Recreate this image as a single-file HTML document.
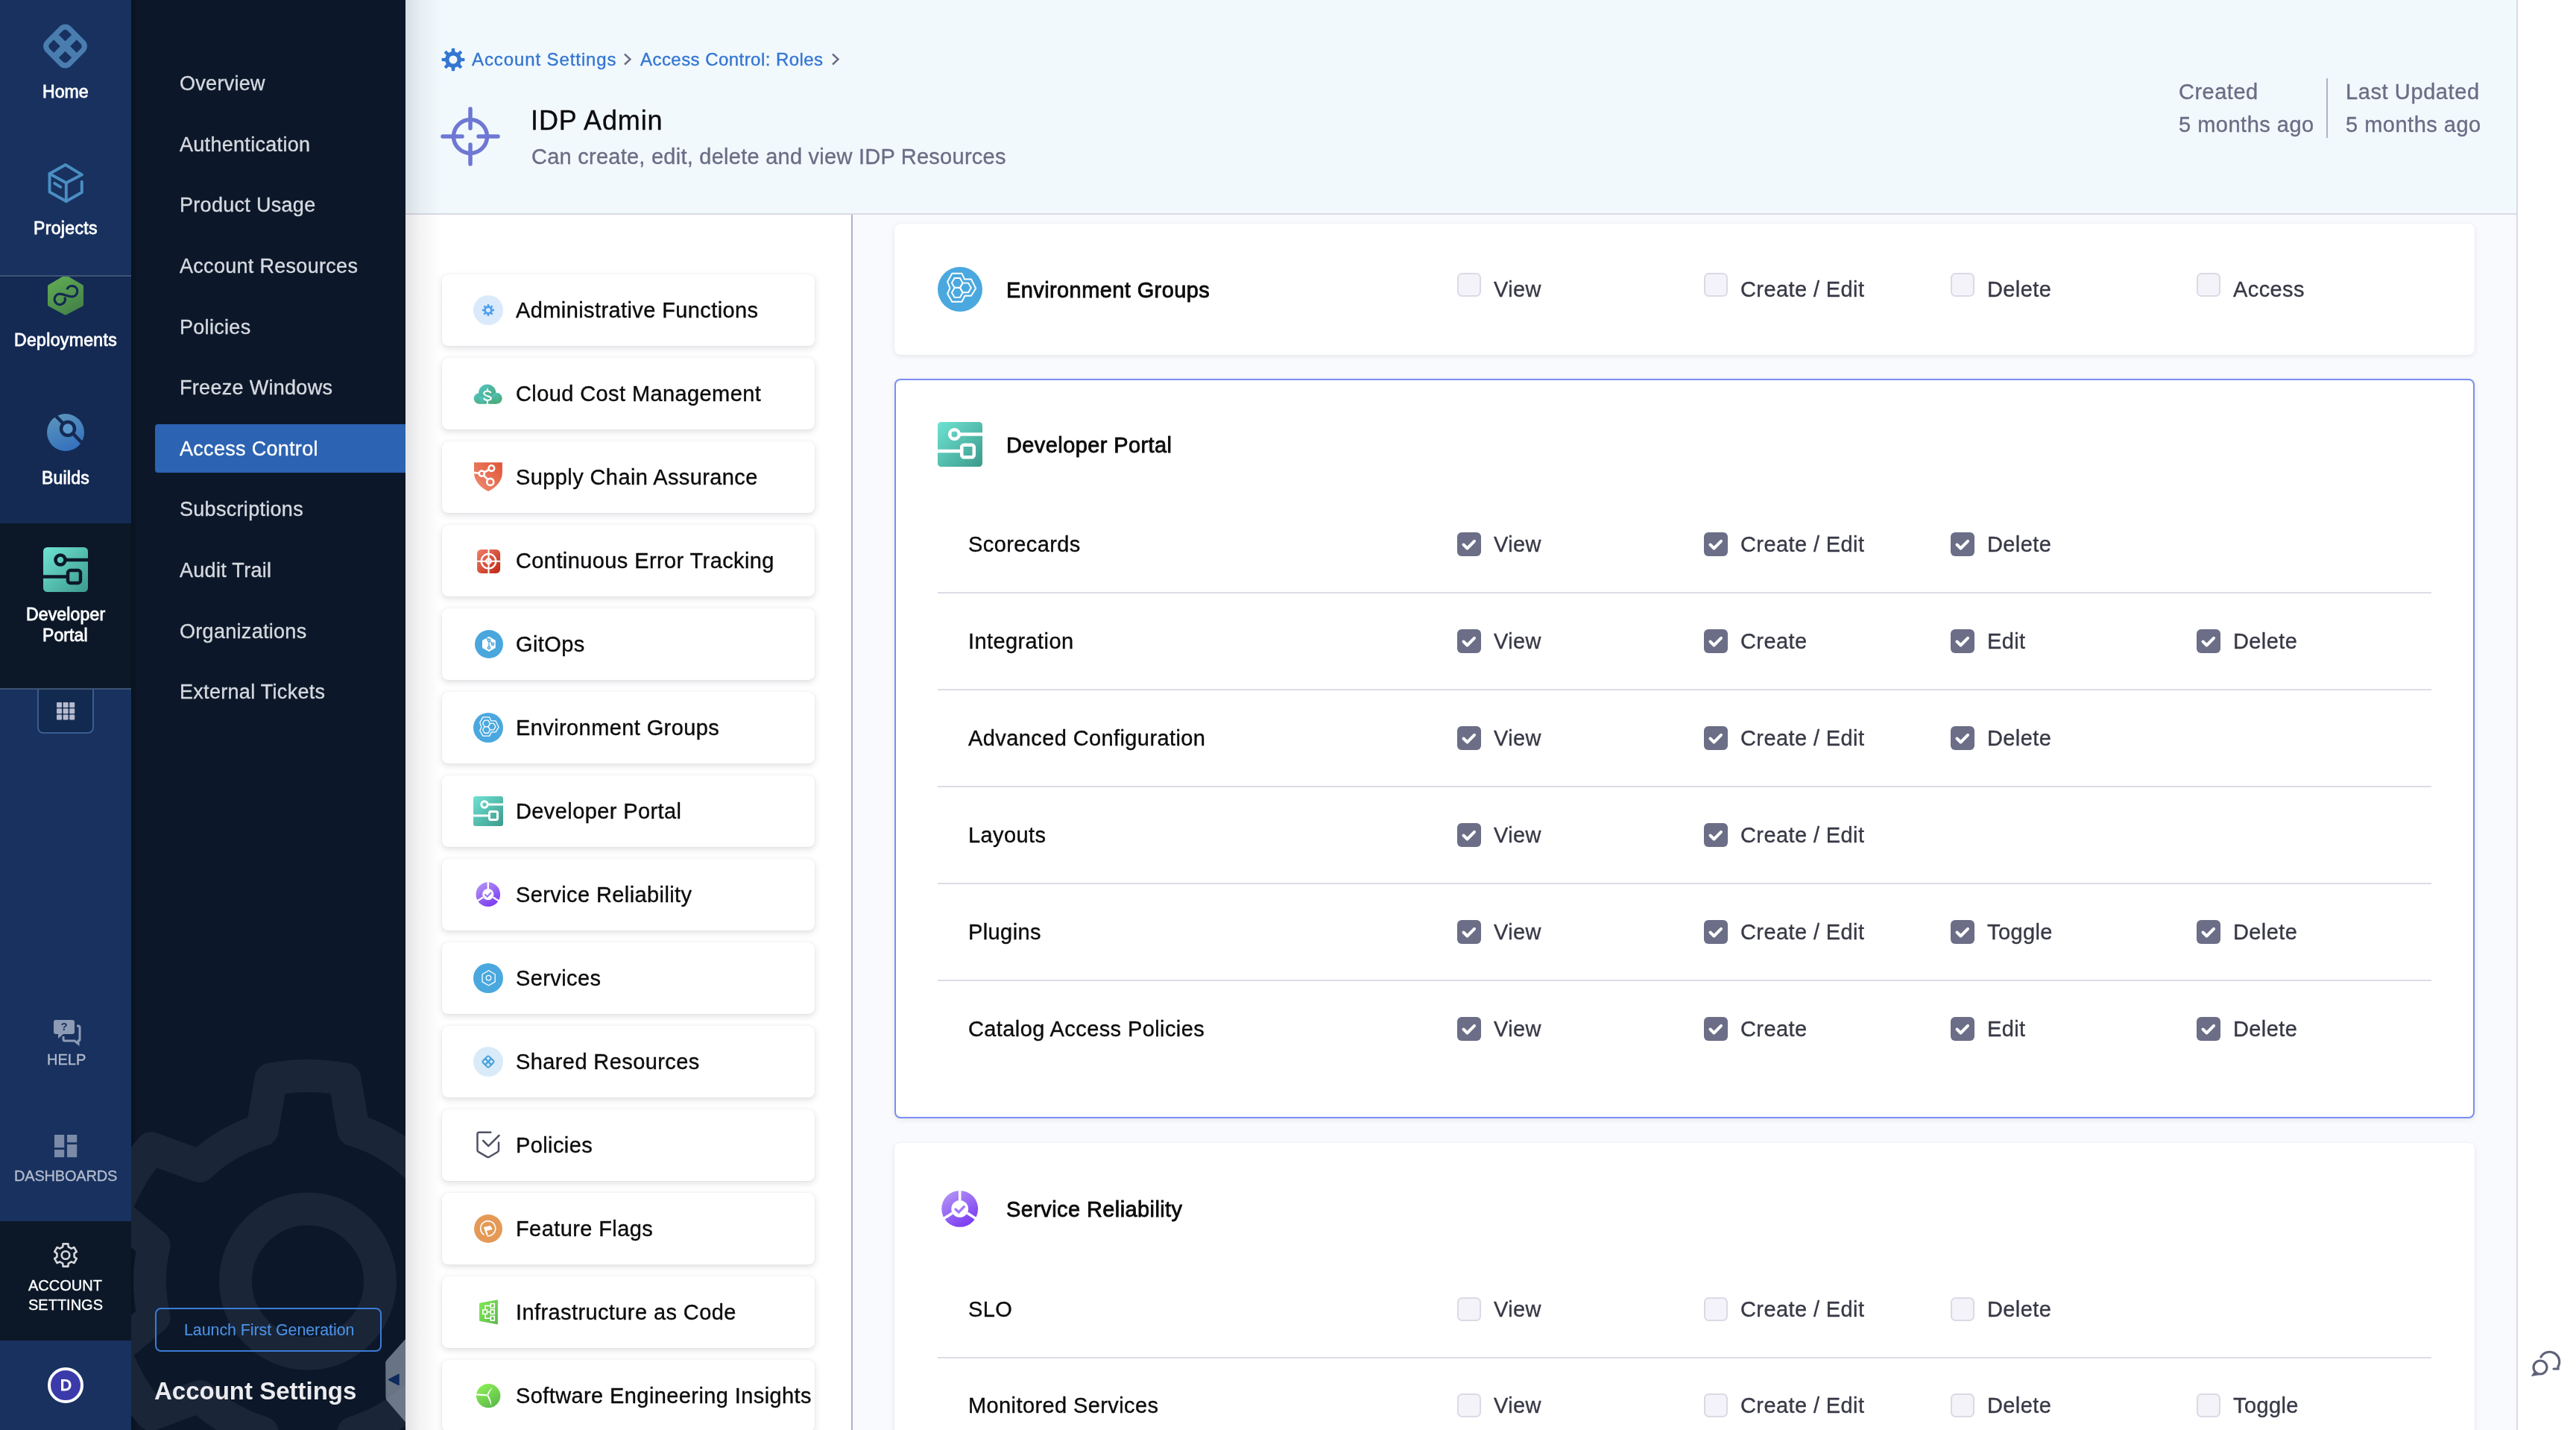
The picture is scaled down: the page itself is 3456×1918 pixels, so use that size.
<!DOCTYPE html>
<html><head><meta charset="utf-8"><title>IDP Admin - Access Control</title>
<style>
html,body{margin:0;padding:0;width:3456px;height:1918px;overflow:hidden;background:#fff}
body{position:relative;font-family:"Liberation Sans",sans-serif}
.a{position:absolute;display:block}
.t{position:absolute;white-space:nowrap;font-family:"Liberation Sans",sans-serif;-webkit-text-stroke:0.35px currentColor}
</style></head><body>
<div style="position:absolute;left:0;top:0;width:3456px;height:1918px;will-change:transform;overflow:hidden">
<div class="a" style="left:0px;top:0px;width:3456px;height:1918px;background:#ffffff"></div>
<div class="a" style="left:0px;top:0px;width:176px;height:370px;background:#18315f"></div>
<div class="a" style="left:0px;top:369px;width:176px;height:2px;background:#3e5474"></div>
<div class="a" style="left:0px;top:371px;width:176px;height:331px;background:#142a53"></div>
<div class="a" style="left:0px;top:702px;width:176px;height:221px;background:#0c1828"></div>
<div class="a" style="left:0px;top:925px;width:176px;height:713px;background:#18315f"></div>
<div class="a" style="left:0px;top:1638px;width:176px;height:160px;background:#0c1828"></div>
<div class="a" style="left:0px;top:1798px;width:176px;height:120px;background:#18315f"></div>
<svg class="a" style="left:57px;top:31px" width="61" height="62" viewBox="0 0 61 62">
<g transform="translate(30.5,31) rotate(45)">
<path fill="#4a7daf" fill-rule="evenodd" d="M-13,-24 H13 A11,11 0 0 1 24,-13 V13 A11,11 0 0 1 13,24 H-13 A11,11 0 0 1 -24,13 V-13 A11,11 0 0 1 -13,-24 Z
M4.7,-17 H12.5 A4.5,4.5 0 0 1 17,-12.5 V-4.7 H4.7 Z
M-4.7,-17 H-12.5 A4.5,4.5 0 0 0 -17,-12.5 V-4.7 H-4.7 Z
M4.7,17 H12.5 A4.5,4.5 0 0 0 17,12.5 V4.7 H4.7 Z
M-4.7,17 H-12.5 A4.5,4.5 0 0 1 -17,12.5 V4.7 H-4.7 Z"/>
</g></svg>
<div class="t" style="left:57px;top:111.53px;font-size:23px;line-height:23px;color:#ffffff;font-weight:400;letter-spacing:0.1px;-webkit-text-stroke:0.8px #ffffff;">Home</div>
<svg class="a" style="left:62px;top:218px" width="52" height="56" viewBox="0 0 52 56">
<g fill="none" stroke="#4a8ec3" stroke-width="3.9" stroke-linejoin="round" stroke-linecap="round">
<path d="M4.5,15 L25.8,3 L48,16.3 L26.8,27.2 Z"/>
<path d="M4.5,15 V39.5 L26.8,52 V27.2"/>
<path d="M47.8,25.8 V40 L26.8,52"/>
<path d="M11.2,27.8 L19.3,32.8"/>
</g></svg>
<div class="t" style="left:45px;top:294.53px;font-size:23px;line-height:23px;color:#ffffff;font-weight:400;letter-spacing:0.35px;-webkit-text-stroke:0.8px #ffffff;">Projects</div>
<svg class="a" style="left:62px;top:371px" width="52" height="52" viewBox="0 0 52 52">
<defs><linearGradient id="gdep" x1="0" y1="0" x2="0.6" y2="1"><stop offset="0" stop-color="#62ad55"/><stop offset="1" stop-color="#478549"/></linearGradient></defs>
<path fill="url(#gdep)" stroke="url(#gdep)" stroke-width="5" stroke-linejoin="round" d="M25.8,0.5 L47.5,13.2 V37.6 L25.8,49 L4.5,37.6 V13.2 Z"/>
<path fill="none" stroke="#142a53" stroke-width="3.2" d="M24.9,27.6 A7.2,7.2 0 1 1 17.8,23.2 C23,23.2 29,26.9 34.6,26.9 A7.2,7.2 0 1 0 27.8,17.3"/>
</svg>
<div class="t" style="left:19px;top:444.53px;font-size:23px;line-height:23px;color:#ffffff;font-weight:400;letter-spacing:0.35px;-webkit-text-stroke:0.8px #ffffff;">Deployments</div>
<svg class="a" style="left:62px;top:554px" width="52" height="52" viewBox="0 0 52 52">
<defs><linearGradient id="gbld" x1="0.2" y1="0" x2="0.6" y2="1"><stop offset="0" stop-color="#5b96bb"/><stop offset="1" stop-color="#3470bf"/></linearGradient></defs>
<circle cx="26" cy="26" r="25" fill="url(#gbld)"/>
<path d="M12,3 L48,40" stroke="#142a53" stroke-width="4.5"/>
<circle cx="29" cy="21" r="9" fill="#5a96cc" stroke="#142a53" stroke-width="4.5"/>
</svg>
<div class="t" style="left:56px;top:629.53px;font-size:23px;line-height:23px;color:#ffffff;font-weight:400;letter-spacing:0.2px;-webkit-text-stroke:0.8px #ffffff;">Builds</div>
<svg class="a" style="left:58px;top:734px" width="60" height="60" viewBox="0 0 60 60">
<defs><linearGradient id="gidp" x1="0" y1="0" x2="1" y2="1"><stop offset="0" stop-color="#6fe3d2"/><stop offset="1" stop-color="#3c9a8c"/></linearGradient></defs>
<rect x="0" y="0" width="60" height="60" rx="5.5" fill="url(#gidp)"/>
<g stroke="#0c1828" stroke-width="4.5" fill="none">
<circle cx="23" cy="17" r="6.5"/>
<path d="M29.5,17 H61"/>
<rect x="33" y="31" width="17" height="17" rx="3.5"/>
<path d="M0,39.5 H33"/>
</g></svg>
<div class="t" style="left:35px;top:812.53px;font-size:23px;line-height:23px;color:#ffffff;font-weight:400;letter-spacing:0.15px;-webkit-text-stroke:0.8px #ffffff;">Developer</div>
<div class="t" style="left:57px;top:840.53px;font-size:23px;line-height:23px;color:#ffffff;font-weight:400;letter-spacing:0.1px;-webkit-text-stroke:0.8px #ffffff;">Portal</div>
<div class="a" style="left:50px;top:923px;width:76px;height:61px;background:#132a50;border:2px solid #3a5c90;border-top:none;border-radius:0 0 8px 8px;box-sizing:border-box"></div>
<svg class="a" style="left:76px;top:942px" width="25" height="24" viewBox="0 0 25 24"><rect x="0.0" y="0.0" width="7" height="7" rx="1" fill="#b8bace"/><rect x="8.6" y="0.0" width="7" height="7" rx="1" fill="#b8bace"/><rect x="17.2" y="0.0" width="7" height="7" rx="1" fill="#b8bace"/><rect x="0.0" y="8.3" width="7" height="7" rx="1" fill="#b8bace"/><rect x="8.6" y="8.3" width="7" height="7" rx="1" fill="#b8bace"/><rect x="17.2" y="8.3" width="7" height="7" rx="1" fill="#b8bace"/><rect x="0.0" y="16.6" width="7" height="7" rx="1" fill="#b8bace"/><rect x="8.6" y="16.6" width="7" height="7" rx="1" fill="#b8bace"/><rect x="17.2" y="16.6" width="7" height="7" rx="1" fill="#b8bace"/></svg>
<div class="a" style="left:0px;top:923px;width:176px;height:2px;background:#3e5474"></div>
<svg class="a" style="left:72px;top:1367px" width="38" height="36" viewBox="0 0 38 36">
<path fill="#8e9bb4" d="M3,1 H25 A3,3 0 0 1 28,4 V17 A3,3 0 0 1 25,20 H13 L6,26 V20 H3 A3,3 0 0 1 0,17 V4 A3,3 0 0 1 3,1 Z"/>
<path fill="none" stroke="#8e9bb4" stroke-width="3" d="M31,9 H33 A2,2 0 0 1 35,11 V27 A2,2 0 0 1 33,29 H33 V33 L28,29 H15 A2,2 0 0 1 13,27 V23"/>
<text x="14" y="15" font-family="Liberation Sans" font-weight="700" font-size="15" text-anchor="middle" fill="#18315f">?</text>
</svg>
<div class="t" style="left:63px;top:1411.07px;font-size:20px;line-height:20px;color:#b2bacb;font-weight:400;letter-spacing:0px;">HELP</div>
<svg class="a" style="left:73px;top:1522px" width="31" height="31" viewBox="0 0 31 31">
<g fill="#7b8aa6"><rect x="0" y="0" width="13.2" height="17.2"/><rect x="17" y="0" width="13.2" height="10.2"/><rect x="0" y="20" width="13.2" height="10.2"/><rect x="17" y="13" width="13.2" height="17.2"/></g></svg>
<div class="t" style="left:19px;top:1567.07px;font-size:20px;line-height:20px;color:#b2bacb;font-weight:400;letter-spacing:-0.2px;">DASHBOARDS</div>
<svg class="a" style="left:68px;top:1664px" width="40" height="40" viewBox="0 0 40 40">
<path fill="none" stroke="#d5d6da" stroke-width="2.6" stroke-linejoin="round" d="M16.24,8.32 L16.62,4.37 L23.38,4.37 L23.76,8.32 L27.80,10.65 L31.41,9.01 L34.79,14.86 L31.57,17.17 L31.57,21.83 L34.79,24.14 L31.41,29.99 L27.80,28.35 L23.76,30.68 L23.38,34.63 L16.62,34.63 L16.24,30.68 L12.20,28.35 L8.59,29.99 L5.21,24.14 L8.43,21.83 L8.43,17.17 L5.21,14.86 L8.59,9.01 L12.20,10.65 Z"/>
<circle cx="20" cy="19.5" r="5.3" fill="none" stroke="#d5d6da" stroke-width="2.6"/></svg>
<div class="t" style="left:38px;top:1714.07px;font-size:20px;line-height:20px;color:#ffffff;font-weight:400;letter-spacing:0px;">ACCOUNT</div>
<div class="t" style="left:38px;top:1740.07px;font-size:20px;line-height:20px;color:#ffffff;font-weight:400;letter-spacing:0px;">SETTINGS</div>
<svg class="a" style="left:63px;top:1833px" width="50" height="50" viewBox="0 0 50 50">
<circle cx="25" cy="25" r="22" fill="#3b3aab" stroke="#ffffff" stroke-width="4"/>
<path fill="#ffffff" fill-rule="evenodd" d="M19,17 H24.3 C29.5,17 32.5,20 32.5,24.7 C32.5,29.4 29.5,32.4 24.3,32.4 H19 Z M22.2,19.8 V29.6 H24.1 C27.4,29.6 29.2,27.9 29.2,24.7 C29.2,21.5 27.4,19.8 24.1,19.8 Z"/></svg>
<div class="a" style="left:176px;top:0px;width:368px;height:1918px;background:#0c1829"></div>
<div class="a" style="left:176px;top:0px;width:10px;height:1918px;background:linear-gradient(90deg,rgba(0,0,0,.25),rgba(0,0,0,0))"></div>
<svg class="a" style="left:176px;top:1380px" width="368" height="538" viewBox="0 0 368 538">
<g transform="translate(237,338.5)">
<path fill="none" stroke="#1a2537" stroke-width="44" stroke-linejoin="round" d="M-61.27,-202.95 L-49.50,-271.02 A275.5,275.5 0 0 1 49.50,-271.02 L61.27,-202.95 A212,212 0 0 1 145.12,-154.54 L209.96,-178.37 A275.5,275.5 0 0 1 259.46,-92.64 L206.40,-48.41 A212,212 0 0 1 206.40,48.41 L259.46,92.64 A275.5,275.5 0 0 1 209.96,178.37 L145.12,154.54 A212,212 0 0 1 61.27,202.95 L49.50,271.02 A275.5,275.5 0 0 1 -49.50,271.02 L-61.27,202.95 A212,212 0 0 1 -145.12,154.54 L-209.96,178.37 A275.5,275.5 0 0 1 -259.46,92.64 L-206.40,48.41 A212,212 0 0 1 -206.40,-48.41 L-259.46,-92.64 A275.5,275.5 0 0 1 -209.96,-178.37 L-145.12,-154.54 A212,212 0 0 1 -61.27,-202.95 Z"/>
<circle cx="0" cy="0" r="97" fill="none" stroke="#1a2537" stroke-width="44"/>
</g></svg>
<div class="t" style="left:241px;top:99.14px;font-size:27px;line-height:27px;color:#d6d9e0;font-weight:400;letter-spacing:0.3px;">Overview</div>
<div class="t" style="left:241px;top:180.74px;font-size:27px;line-height:27px;color:#d6d9e0;font-weight:400;letter-spacing:0.3px;">Authentication</div>
<div class="t" style="left:241px;top:262.34px;font-size:27px;line-height:27px;color:#d6d9e0;font-weight:400;letter-spacing:0.3px;">Product Usage</div>
<div class="t" style="left:241px;top:343.94px;font-size:27px;line-height:27px;color:#d6d9e0;font-weight:400;letter-spacing:0.3px;">Account Resources</div>
<div class="t" style="left:241px;top:425.54px;font-size:27px;line-height:27px;color:#d6d9e0;font-weight:400;letter-spacing:0.3px;">Policies</div>
<div class="t" style="left:241px;top:507.14px;font-size:27px;line-height:27px;color:#d6d9e0;font-weight:400;letter-spacing:0.3px;">Freeze Windows</div>
<div class="a" style="left:208px;top:569px;width:336px;height:65px;background:#2c63b2;border-radius:4px 0 0 4px"></div>
<div class="t" style="left:241px;top:588.74px;font-size:27px;line-height:27px;color:#ffffff;font-weight:400;letter-spacing:0.3px;">Access Control</div>
<div class="t" style="left:241px;top:670.34px;font-size:27px;line-height:27px;color:#d6d9e0;font-weight:400;letter-spacing:0.3px;">Subscriptions</div>
<div class="t" style="left:241px;top:751.94px;font-size:27px;line-height:27px;color:#d6d9e0;font-weight:400;letter-spacing:0.3px;">Audit Trail</div>
<div class="t" style="left:241px;top:833.54px;font-size:27px;line-height:27px;color:#d6d9e0;font-weight:400;letter-spacing:0.3px;">Organizations</div>
<div class="t" style="left:241px;top:915.14px;font-size:27px;line-height:27px;color:#d6d9e0;font-weight:400;letter-spacing:0.3px;">External Tickets</div>
<div class="a" style="left:208px;top:1754px;width:304px;height:59px;border:2px solid #3a7bd6;border-radius:8px;box-sizing:border-box"></div>
<div class="t" style="left:247px;top:1773.88px;font-size:21.4px;line-height:21.4px;color:#4b92e6;font-weight:400;letter-spacing:-0.05px;-webkit-text-stroke:0.1px #4b92e6;">Launch First Generation</div>
<div class="t" style="left:207px;top:1849.07px;font-size:33px;line-height:33px;color:#ececf0;font-weight:700;letter-spacing:0px;-webkit-text-stroke:0;">Account Settings</div>
<svg class="a" style="left:516px;top:1795px" width="28" height="123" viewBox="0 0 28 123">
<path fill="rgba(170,182,198,0.58)" d="M28,1 L2.5,29.5 Q1,31.5 1.2,34 L1.5,79 Q1.6,82 3.5,84 L28,112.5 Z"/>
<path fill="#0f2a5c" stroke="#0f2a5c" stroke-width="1.5" stroke-linejoin="round" d="M19,48.5 V62.5 L5.5,55.5 Z"/></svg>
<div class="a" style="left:544px;top:0px;width:2832px;height:286px;background:#f1f9fd"></div>
<div class="a" style="left:544px;top:286px;width:2832px;height:2px;background:#d9dae5"></div>
<svg class="a" style="left:592px;top:64px" width="32" height="32" viewBox="0 0 32 32">
<path fill="#3476d2" fill-rule="evenodd" d="M13.64,5.26 L13.94,0.64 L18.06,0.64 L18.36,5.26 L21.93,6.74 L25.40,3.68 L28.32,6.60 L25.26,10.07 L26.74,13.64 L31.36,13.94 L31.36,18.06 L26.74,18.36 L25.26,21.93 L28.32,25.40 L25.40,28.32 L21.93,25.26 L18.36,26.74 L18.06,31.36 L13.94,31.36 L13.64,26.74 L10.07,25.26 L6.60,28.32 L3.68,25.40 L6.74,21.93 L5.26,18.36 L0.64,18.06 L0.64,13.94 L5.26,13.64 L6.74,10.07 L3.68,6.60 L6.60,3.68 L10.07,6.74 Z M16,10.5 A5.5,5.5 0 1 0 16,21.5 A5.5,5.5 0 1 0 16,10.5 Z"/></svg>
<div class="t" style="left:633px;top:67.68px;font-size:24px;line-height:24px;color:#3475d1;font-weight:400;letter-spacing:0.9px;">Account Settings</div>
<svg class="a" style="left:836px;top:71px" width="12" height="17" viewBox="0 0 12 17"><path d="M2,1.5 L9.5,8.5 L2,15.5" fill="none" stroke="#6b6d85" stroke-width="2.4"/></svg>
<div class="t" style="left:859px;top:67.68px;font-size:24px;line-height:24px;color:#3475d1;font-weight:400;letter-spacing:0.45px;">Access Control: Roles</div>
<svg class="a" style="left:1115px;top:71px" width="12" height="17" viewBox="0 0 12 17"><path d="M2,1.5 L9.5,8.5 L2,15.5" fill="none" stroke="#6b6d85" stroke-width="2.4"/></svg>
<svg class="a" style="left:590px;top:142px" width="82" height="82" viewBox="0 0 82 82">
<g fill="none" stroke="#6e78d3" stroke-width="5.5" stroke-linecap="round">
<circle cx="41" cy="41" r="22.5"/>
<path d="M41,4 V30 M41,52 V78 M4,41 H30 M52,41 H78"/>
</g></svg>
<div class="t" style="left:712px;top:143.53px;font-size:36px;line-height:36px;color:#0b0b0d;font-weight:400;letter-spacing:0.9px;">IDP Admin</div>
<div class="t" style="left:713px;top:196.45px;font-size:29px;line-height:29px;color:#6b6d85;font-weight:400;letter-spacing:0.25px;">Can create, edit, delete and view IDP Resources</div>
<div class="t" style="left:2923px;top:109.45px;font-size:29px;line-height:29px;color:#6b6d85;font-weight:400;letter-spacing:0.5px;">Created</div>
<div class="t" style="left:2923px;top:153.45px;font-size:29px;line-height:29px;color:#6b6d85;font-weight:400;letter-spacing:0.5px;">5 months ago</div>
<div class="a" style="left:3121px;top:105px;width:2px;height:80px;background:#b0b1c4"></div>
<div class="t" style="left:3147px;top:109.45px;font-size:29px;line-height:29px;color:#6b6d85;font-weight:400;letter-spacing:0.6px;">Last Updated</div>
<div class="t" style="left:3147px;top:153.45px;font-size:29px;line-height:29px;color:#6b6d85;font-weight:400;letter-spacing:0.5px;">5 months ago</div>
<div class="a" style="left:3376px;top:0px;width:2px;height:1918px;background:#d9dae5"></div>
<div class="a" style="left:3378px;top:0px;width:78px;height:1918px;background:#ffffff"></div>
<svg class="a" style="left:3396px;top:1806px" width="44" height="44" viewBox="0 0 44 44">
<g fill="none" stroke="#5f6279" stroke-width="3.2" stroke-linecap="round">
<path d="M13,14 A12,12 0 1 1 36,27 L36,30 L30,30"/>
<circle cx="12" cy="28" r="9"/>
<path d="M5,35 L3,38 L9,37"/>
</g></svg>
<div class="a" style="left:544px;top:288px;width:598px;height:1630px;background:#ffffff"></div>
<div class="a" style="left:1142px;top:288px;width:2px;height:1630px;background:#aeafc4"></div>
<div class="a" style="left:593px;top:368px;width:500px;height:96px;background:#fff;border-radius:8px;box-shadow:0 0 1px rgba(40,41,61,.12),0 3px 8px rgba(96,97,112,.2)"></div>
<svg class="a" style="left:635px;top:396px" width="40" height="40" viewBox="0 0 40 40"><g transform="scale(1.0)"><circle cx="20" cy="20" r="20" fill="#dbeafa"/><path fill="#4c9ff0" fill-rule="evenodd" d="M18.76,14.33 L18.84,11.88 L21.16,11.88 L21.24,14.33 L23.13,15.12 L24.92,13.44 L26.56,15.08 L24.88,16.87 L25.67,18.76 L28.12,18.84 L28.12,21.16 L25.67,21.24 L24.88,23.13 L26.56,24.92 L24.92,26.56 L23.13,24.88 L21.24,25.67 L21.16,28.12 L18.84,28.12 L18.76,25.67 L16.87,24.88 L15.08,26.56 L13.44,24.92 L15.12,23.13 L14.33,21.24 L11.88,21.16 L11.88,18.84 L14.33,18.76 L15.12,16.87 L13.44,15.08 L15.08,13.44 L16.87,15.12 Z M20,17 A3,3 0 1 0 20,23 A3,3 0 1 0 20,17 Z"/></g></svg>
<div class="t" style="left:692px;top:402.45px;font-size:29px;line-height:29px;color:#0b0b0d;font-weight:400;letter-spacing:0.4px;">Administrative Functions</div>
<div class="a" style="left:593px;top:480px;width:500px;height:96px;background:#fff;border-radius:8px;box-shadow:0 0 1px rgba(40,41,61,.12),0 3px 8px rgba(96,97,112,.2)"></div>
<svg class="a" style="left:635px;top:508px" width="40" height="40" viewBox="0 0 40 40"><g transform="scale(1.0)"><defs><linearGradient id="gccm635508" x1="0" y1="0" x2="1" y2="1"><stop offset="0" stop-color="#52c6c9"/><stop offset="1" stop-color="#4aa56c"/></linearGradient></defs><g fill="url(#gccm635508)"><circle cx="18.7" cy="19" r="11.6"/><circle cx="8" cy="26.5" r="7.3"/><circle cx="31.3" cy="26.2" r="7.4"/><rect x="8" y="24" width="23.3" height="9.8"/></g><path d="M19,13 V16.5 M19,28.5 V34" stroke="#fff" stroke-width="2" fill="none"/><path d="M23.6,19.2 C22.8,17.3 21,16.4 19,16.4 C16.2,16.4 14.2,17.9 14.2,19.8 C14.2,24.1 23.8,22.4 23.8,26 C23.8,27.9 21.8,28.8 19,28.8 C16.6,28.8 14.8,27.7 14,26" stroke="#fff" stroke-width="2" fill="none"/></g></svg>
<div class="t" style="left:692px;top:514.45px;font-size:29px;line-height:29px;color:#0b0b0d;font-weight:400;letter-spacing:0.4px;">Cloud Cost Management</div>
<div class="a" style="left:593px;top:592px;width:500px;height:96px;background:#fff;border-radius:8px;box-shadow:0 0 1px rgba(40,41,61,.12),0 3px 8px rgba(96,97,112,.2)"></div>
<svg class="a" style="left:635px;top:620px" width="40" height="40" viewBox="0 0 40 40"><g transform="scale(1.0)"><defs><linearGradient id="gsca635620" x1="1" y1="0" x2="0" y2="1"><stop offset="0" stop-color="#e05436"/><stop offset="1" stop-color="#ef8f76"/></linearGradient></defs><path fill="url(#gsca635620)" d="M1,0.3 H38.9 V14.4 C38.9,25 30,34 20,39 C10,34 1,25 1,14.4 Z"/><g fill="none" stroke="#fff" stroke-width="2.6"><circle cx="24.4" cy="8.1" r="3.8"/><circle cx="11.3" cy="15.1" r="3.6"/><circle cx="22.8" cy="26.4" r="4.5"/><path d="M21,10 L14.5,13.5 M13.8,17.8 L19.5,23.2 M0.5,13.9 L7.8,14.8"/></g></g></svg>
<div class="t" style="left:692px;top:626.45px;font-size:29px;line-height:29px;color:#0b0b0d;font-weight:400;letter-spacing:0.4px;">Supply Chain Assurance</div>
<div class="a" style="left:593px;top:704px;width:500px;height:96px;background:#fff;border-radius:8px;box-shadow:0 0 1px rgba(40,41,61,.12),0 3px 8px rgba(96,97,112,.2)"></div>
<svg class="a" style="left:635px;top:732px" width="40" height="40" viewBox="0 0 40 40"><g transform="scale(1.0)"><defs><linearGradient id="gcet635732" x1="0" y1="0" x2="1" y2="1"><stop offset="0" stop-color="#ee806a"/><stop offset="1" stop-color="#bf2612"/></linearGradient></defs><rect x="5.1" y="4.9" width="31" height="32" rx="5.5" fill="url(#gcet635732)"/><g fill="none" stroke="#fff"><circle cx="20.5" cy="20.7" r="9.8" stroke-width="2.2"/><circle cx="20.5" cy="20.7" r="3.4" stroke-width="2.1"/><path d="M20.5,4.9 V36.9 M5.1,20.7 H36.1" stroke-width="2.1"/></g></g></svg>
<div class="t" style="left:692px;top:738.45px;font-size:29px;line-height:29px;color:#0b0b0d;font-weight:400;letter-spacing:0.4px;">Continuous Error Tracking</div>
<div class="a" style="left:593px;top:816px;width:500px;height:96px;background:#fff;border-radius:8px;box-shadow:0 0 1px rgba(40,41,61,.12),0 3px 8px rgba(96,97,112,.2)"></div>
<svg class="a" style="left:635px;top:844px" width="40" height="40" viewBox="0 0 40 40"><g transform="scale(1.0)"><circle cx="21" cy="20" r="19" fill="#49a7de"/><path fill="#fff" d="M21,9.8 L29.8,14.9 V25 L21,30 L12,25 V14.9 Z"/><g fill="none" stroke="#49a7de" stroke-width="1.3"><path d="M16.5,11 L21,14.7 V24.9 M21,14.7 L26.1,19.8"/><circle cx="21" cy="14.7" r="1.7" fill="#b9def3"/><circle cx="26.1" cy="19.8" r="1.7" fill="#b9def3"/><circle cx="21" cy="24.9" r="1.7" fill="#b9def3"/></g></g></svg>
<div class="t" style="left:692px;top:850.45px;font-size:29px;line-height:29px;color:#0b0b0d;font-weight:400;letter-spacing:0.4px;">GitOps</div>
<div class="a" style="left:593px;top:928px;width:500px;height:96px;background:#fff;border-radius:8px;box-shadow:0 0 1px rgba(40,41,61,.12),0 3px 8px rgba(96,97,112,.2)"></div>
<svg class="a" style="left:635px;top:956px" width="40" height="40" viewBox="0 0 40 40"><g transform="scale(1.0)"><circle cx="20" cy="20" r="20" fill="#4aa8df"/><g fill="none" stroke="#fff" stroke-width="1.3" stroke-linejoin="round"><path d="M22.40,14.30 L19.95,18.54 L15.05,18.54 L12.60,14.30 L15.05,10.06 L19.95,10.06 Z M22.40,23.00 L19.95,27.24 L15.05,27.24 L12.60,23.00 L15.05,18.76 L19.95,18.76 Z M29.90,18.65 L27.45,22.89 L22.55,22.89 L20.10,18.65 L22.55,14.41 L27.45,14.41 Z"/><path d="M8.75,13.2 L12.87,5.89 H21.7 L23.96,10.96 H29.99 L34.1,19.2 L29.99,25.87 H24.28 L21.7,31.1 H12.87 L8.75,23.96 L10.96,18.9 Z"/></g></g></svg>
<div class="t" style="left:692px;top:962.45px;font-size:29px;line-height:29px;color:#0b0b0d;font-weight:400;letter-spacing:0.4px;">Environment Groups</div>
<div class="a" style="left:593px;top:1040px;width:500px;height:96px;background:#fff;border-radius:8px;box-shadow:0 0 1px rgba(40,41,61,.12),0 3px 8px rgba(96,97,112,.2)"></div>
<svg class="a" style="left:635px;top:1068px" width="40" height="40" viewBox="0 0 40 40"><g transform="scale(1.0)"><defs><linearGradient id="gidp6351068" x1="0" y1="0" x2="1" y2="1"><stop offset="0" stop-color="#6fe3d2"/><stop offset="1" stop-color="#3c9a8c"/></linearGradient></defs><rect x="0" y="0" width="40" height="40" rx="3" fill="url(#gidp6351068)"/><g stroke="#fff" stroke-width="3" fill="none"><circle cx="15" cy="11" r="4.2"/><path d="M19.2,11 H40"/><rect x="21.5" y="20.5" width="11" height="11" rx="2"/><path d="M0,26 H21.5"/></g></g></svg>
<div class="t" style="left:692px;top:1074.45px;font-size:29px;line-height:29px;color:#0b0b0d;font-weight:400;letter-spacing:0.4px;">Developer Portal</div>
<div class="a" style="left:593px;top:1152px;width:500px;height:96px;background:#fff;border-radius:8px;box-shadow:0 0 1px rgba(40,41,61,.12),0 3px 8px rgba(96,97,112,.2)"></div>
<svg class="a" style="left:635px;top:1180px" width="40" height="40" viewBox="0 0 40 40"><g transform="scale(1.0)"><defs><linearGradient id="gsrm6351180" x1="0.2" y1="0" x2="0.8" y2="1"><stop offset="0" stop-color="#b394f6"/><stop offset="1" stop-color="#7836f0"/></linearGradient></defs><circle cx="19.8" cy="19.6" r="16.3" fill="url(#gsrm6351180)"/><circle cx="19.8" cy="19.6" r="7.6" fill="#fff"/><g stroke="#fff" stroke-width="2.4" fill="none"><path d="M19.8,2 V12 M3.5,29.5 L13.2,23.4 M36.1,29.5 L26.4,23.4"/></g><path d="M16,20 L18.8,22.6 L23.6,17.6" fill="none" stroke="#a27af5" stroke-width="2.2" stroke-linecap="round"/></g></svg>
<div class="t" style="left:692px;top:1186.45px;font-size:29px;line-height:29px;color:#0b0b0d;font-weight:400;letter-spacing:0.4px;">Service Reliability</div>
<div class="a" style="left:593px;top:1264px;width:500px;height:96px;background:#fff;border-radius:8px;box-shadow:0 0 1px rgba(40,41,61,.12),0 3px 8px rgba(96,97,112,.2)"></div>
<svg class="a" style="left:635px;top:1292px" width="40" height="40" viewBox="0 0 40 40"><g transform="scale(1.0)"><circle cx="20" cy="20" r="20" fill="#4aa8df"/><path fill="none" stroke="#fff" stroke-width="1.3" d="M20.6,9.8 L29.2,14.8 V24.8 L20.6,29.8 L12,24.8 V14.8 Z"/><circle cx="20.5" cy="19.6" r="3.3" fill="none" stroke="#fff" stroke-width="1.3"/></g></svg>
<div class="t" style="left:692px;top:1298.45px;font-size:29px;line-height:29px;color:#0b0b0d;font-weight:400;letter-spacing:0.4px;">Services</div>
<div class="a" style="left:593px;top:1376px;width:500px;height:96px;background:#fff;border-radius:8px;box-shadow:0 0 1px rgba(40,41,61,.12),0 3px 8px rgba(96,97,112,.2)"></div>
<svg class="a" style="left:635px;top:1404px" width="40" height="40" viewBox="0 0 40 40"><g transform="scale(1.0)"><circle cx="20" cy="20" r="20" fill="#d9eaf9"/><g transform="translate(20,20) rotate(45)"><path fill="#47a3dd" fill-rule="evenodd" d="M-3.5,-6.9 H3.5 A3.4,3.4 0 0 1 6.9,-3.5 V3.5 A3.4,3.4 0 0 1 3.5,6.9 H-3.5 A3.4,3.4 0 0 1 -6.9,3.5 V-3.5 A3.4,3.4 0 0 1 -3.5,-6.9 Z M1.2,-4.7 H4.7 V-1.2 H1.2 Z M-1.2,-4.7 H-4.7 V-1.2 H-1.2 Z M1.2,4.7 H4.7 V1.2 H1.2 Z M-1.2,4.7 H-4.7 V1.2 H-1.2 Z"/></g></g></svg>
<div class="t" style="left:692px;top:1410.45px;font-size:29px;line-height:29px;color:#0b0b0d;font-weight:400;letter-spacing:0.4px;">Shared Resources</div>
<div class="a" style="left:593px;top:1488px;width:500px;height:96px;background:#fff;border-radius:8px;box-shadow:0 0 1px rgba(40,41,61,.12),0 3px 8px rgba(96,97,112,.2)"></div>
<svg class="a" style="left:635px;top:1516px" width="40" height="40" viewBox="0 0 40 40"><g transform="scale(1.0)"><g fill="none" stroke="#4f5264" stroke-width="2.5" stroke-linecap="round" stroke-linejoin="round"><path d="M23.3,2.8 H8 A2.5,2.5 0 0 0 5.5,5.3 V26.5 A3,3 0 0 0 7.2,29.2 L18.7,35.8 A3,3 0 0 0 21.3,35.8 L32.3,29.2 A3,3 0 0 0 34,26.4 V16.5"/><path d="M13.2,14 L20.3,21.2 L34.5,7"/></g></g></svg>
<div class="t" style="left:692px;top:1522.45px;font-size:29px;line-height:29px;color:#0b0b0d;font-weight:400;letter-spacing:0.4px;">Policies</div>
<div class="a" style="left:593px;top:1600px;width:500px;height:96px;background:#fff;border-radius:8px;box-shadow:0 0 1px rgba(40,41,61,.12),0 3px 8px rgba(96,97,112,.2)"></div>
<svg class="a" style="left:635px;top:1628px" width="40" height="40" viewBox="0 0 40 40"><g transform="scale(1.0)"><circle cx="20" cy="20" r="19" fill="#e49a56"/><path d="M14.5,28.2 A10,10 0 1 1 18.5,29.6" fill="none" stroke="#fff" stroke-width="1.6"/><path fill="#fff" d="M13.8,18.3 C16,17 19,17.6 22.6,15.8 L25.8,20.7 C22.5,22.3 20.5,21.6 18,23 L19.8,28 L17.9,29 Z"/></g></svg>
<div class="t" style="left:692px;top:1634.45px;font-size:29px;line-height:29px;color:#0b0b0d;font-weight:400;letter-spacing:0.4px;">Feature Flags</div>
<div class="a" style="left:593px;top:1712px;width:500px;height:96px;background:#fff;border-radius:8px;box-shadow:0 0 1px rgba(40,41,61,.12),0 3px 8px rgba(96,97,112,.2)"></div>
<svg class="a" style="left:635px;top:1740px" width="40" height="40" viewBox="0 0 40 40"><g transform="scale(1.0)"><defs><linearGradient id="giac6351740" x1="0" y1="0" x2="1" y2="1"><stop offset="0" stop-color="#80ea55"/><stop offset="1" stop-color="#5db84c"/></linearGradient></defs><path fill="url(#giac6351740)" d="M8.1,8.8 Q8.1,7.7 9.2,7.5 L32.9,3.2 V36.4 L9.2,32.1 Q8.1,31.9 8.1,30.8 Z"/><g fill="none" stroke="#fff" stroke-width="1.6"><rect x="23.3" y="8.6" width="5" height="5.6"/><rect x="23.3" y="16.8" width="5" height="5.6"/><rect x="23.3" y="25.5" width="5" height="5.6"/><rect x="12.8" y="16.8" width="5.6" height="5.6"/><path d="M16,16.8 V11.4 H23.3 M16,22.4 V28.3 H23.3 M18.4,19.6 H23.3"/></g></g></svg>
<div class="t" style="left:692px;top:1746.45px;font-size:29px;line-height:29px;color:#0b0b0d;font-weight:400;letter-spacing:0.4px;">Infrastructure as Code</div>
<div class="a" style="left:593px;top:1824px;width:500px;height:96px;background:#fff;border-radius:8px;box-shadow:0 0 1px rgba(40,41,61,.12),0 3px 8px rgba(96,97,112,.2)"></div>
<svg class="a" style="left:635px;top:1852px" width="40" height="40" viewBox="0 0 40 40"><g transform="scale(1.0)"><defs><linearGradient id="gsei6351852" x1="0.2" y1="0" x2="0.8" y2="1"><stop offset="0" stop-color="#8df055"/><stop offset="1" stop-color="#5ab84a"/></linearGradient></defs><circle cx="20.2" cy="20.1" r="16.2" fill="url(#gsei6351852)"/><g fill="#fff"><path d="M4.2,17.6 C9,17.6 14,17.9 18.5,18.6 L18.8,20.6 C14,20 9,19.6 4.2,19.4 Z"/><path d="M25.8,9 C23.5,12.5 21.5,15.5 20.2,19 L18.2,19.4 C19.5,15.2 22,11 25.8,9 Z"/><path d="M24.3,33.8 C22.5,29 20.8,24.5 18.5,20.5 L20.2,19.3 C22.5,23.5 24.5,28.5 24.3,33.8 Z"/></g></g></svg>
<div class="t" style="left:692px;top:1858.45px;font-size:29px;line-height:29px;color:#0b0b0d;font-weight:400;letter-spacing:0.4px;">Software Engineering Insights</div>
<div class="a" style="left:1144px;top:288px;width:2232px;height:1630px;background:#f9fafd"></div>
<div class="a" style="left:1200px;top:300px;width:2120px;height:176px;background:#fff;border-radius:8px;box-shadow:0 0 1px rgba(40,41,61,.08),0 2px 6px rgba(96,97,112,.12)"></div>
<svg class="a" style="left:1258px;top:358px" width="60" height="60" viewBox="0 0 60 60"><g transform="scale(1.5)"><circle cx="20" cy="20" r="20" fill="#4aa8df"/><g fill="none" stroke="#fff" stroke-width="1.3" stroke-linejoin="round"><path d="M22.40,14.30 L19.95,18.54 L15.05,18.54 L12.60,14.30 L15.05,10.06 L19.95,10.06 Z M22.40,23.00 L19.95,27.24 L15.05,27.24 L12.60,23.00 L15.05,18.76 L19.95,18.76 Z M29.90,18.65 L27.45,22.89 L22.55,22.89 L20.10,18.65 L22.55,14.41 L27.45,14.41 Z"/><path d="M8.75,13.2 L12.87,5.89 H21.7 L23.96,10.96 H29.99 L34.1,19.2 L29.99,25.87 H24.28 L21.7,31.1 H12.87 L8.75,23.96 L10.96,18.9 Z"/></g></g></svg>
<div class="t" style="left:1350px;top:375.45px;font-size:29px;line-height:29px;color:#0b0b0d;font-weight:400;letter-spacing:0.4px;-webkit-text-stroke:0.8px #0b0b0d;">Environment Groups</div>
<svg class="a" style="left:1955px;top:366px" width="32" height="32" viewBox="0 0 32 32"><rect x="1" y="1" width="30" height="30" rx="5.5" fill="#f3f3f9" stroke="#d9dae6" stroke-width="2"/></svg>
<div class="t" style="left:2004px;top:374.45px;font-size:29px;line-height:29px;color:#383946;font-weight:400;letter-spacing:0.4px;">View</div>
<svg class="a" style="left:2286px;top:366px" width="32" height="32" viewBox="0 0 32 32"><rect x="1" y="1" width="30" height="30" rx="5.5" fill="#f3f3f9" stroke="#d9dae6" stroke-width="2"/></svg>
<div class="t" style="left:2335px;top:374.45px;font-size:29px;line-height:29px;color:#383946;font-weight:400;letter-spacing:0.4px;">Create / Edit</div>
<svg class="a" style="left:2617px;top:366px" width="32" height="32" viewBox="0 0 32 32"><rect x="1" y="1" width="30" height="30" rx="5.5" fill="#f3f3f9" stroke="#d9dae6" stroke-width="2"/></svg>
<div class="t" style="left:2666px;top:374.45px;font-size:29px;line-height:29px;color:#383946;font-weight:400;letter-spacing:0.4px;">Delete</div>
<svg class="a" style="left:2947px;top:366px" width="32" height="32" viewBox="0 0 32 32"><rect x="1" y="1" width="30" height="30" rx="5.5" fill="#f3f3f9" stroke="#d9dae6" stroke-width="2"/></svg>
<div class="t" style="left:2996px;top:374.45px;font-size:29px;line-height:29px;color:#383946;font-weight:400;letter-spacing:0.4px;">Access</div>
<div class="a" style="left:1200px;top:508px;width:2120px;height:992px;background:#fff;border:2px solid #7b8df5;border-radius:8px;box-sizing:border-box;box-shadow:0 0 1px rgba(40,41,61,.08),0 2px 6px rgba(96,97,112,.12)"></div>
<svg class="a" style="left:1258px;top:566px" width="60" height="60" viewBox="0 0 60 60"><g transform="scale(1.5)"><defs><linearGradient id="gidp1258566" x1="0" y1="0" x2="1" y2="1"><stop offset="0" stop-color="#6fe3d2"/><stop offset="1" stop-color="#3c9a8c"/></linearGradient></defs><rect x="0" y="0" width="40" height="40" rx="3" fill="url(#gidp1258566)"/><g stroke="#fff" stroke-width="3" fill="none"><circle cx="15" cy="11" r="4.2"/><path d="M19.2,11 H40"/><rect x="21.5" y="20.5" width="11" height="11" rx="2"/><path d="M0,26 H21.5"/></g></g></svg>
<div class="t" style="left:1350px;top:583.45px;font-size:29px;line-height:29px;color:#0b0b0d;font-weight:400;letter-spacing:0.4px;-webkit-text-stroke:0.8px #0b0b0d;">Developer Portal</div>
<div class="t" style="left:1299px;top:716.45px;font-size:29px;line-height:29px;color:#0b0b0d;font-weight:400;letter-spacing:0.4px;">Scorecards</div>
<svg class="a" style="left:1955px;top:714px" width="32" height="32" viewBox="0 0 32 32"><rect x="0" y="0" width="32" height="32" rx="6" fill="#6b6e86"/><path d="M8.5,16.5 L13.5,21.5 L23,11.8" fill="none" stroke="#fff" stroke-width="4" stroke-linecap="round" stroke-linejoin="round"/></svg>
<div class="t" style="left:2004px;top:716.45px;font-size:29px;line-height:29px;color:#383946;font-weight:400;letter-spacing:0.4px;">View</div>
<svg class="a" style="left:2286px;top:714px" width="32" height="32" viewBox="0 0 32 32"><rect x="0" y="0" width="32" height="32" rx="6" fill="#6b6e86"/><path d="M8.5,16.5 L13.5,21.5 L23,11.8" fill="none" stroke="#fff" stroke-width="4" stroke-linecap="round" stroke-linejoin="round"/></svg>
<div class="t" style="left:2335px;top:716.45px;font-size:29px;line-height:29px;color:#383946;font-weight:400;letter-spacing:0.4px;">Create / Edit</div>
<svg class="a" style="left:2617px;top:714px" width="32" height="32" viewBox="0 0 32 32"><rect x="0" y="0" width="32" height="32" rx="6" fill="#6b6e86"/><path d="M8.5,16.5 L13.5,21.5 L23,11.8" fill="none" stroke="#fff" stroke-width="4" stroke-linecap="round" stroke-linejoin="round"/></svg>
<div class="t" style="left:2666px;top:716.45px;font-size:29px;line-height:29px;color:#383946;font-weight:400;letter-spacing:0.4px;">Delete</div>
<div class="a" style="left:1258px;top:794px;width:2004px;height:2px;background:#dcdde8"></div>
<div class="t" style="left:1299px;top:846.45px;font-size:29px;line-height:29px;color:#0b0b0d;font-weight:400;letter-spacing:0.4px;">Integration</div>
<svg class="a" style="left:1955px;top:844px" width="32" height="32" viewBox="0 0 32 32"><rect x="0" y="0" width="32" height="32" rx="6" fill="#6b6e86"/><path d="M8.5,16.5 L13.5,21.5 L23,11.8" fill="none" stroke="#fff" stroke-width="4" stroke-linecap="round" stroke-linejoin="round"/></svg>
<div class="t" style="left:2004px;top:846.45px;font-size:29px;line-height:29px;color:#383946;font-weight:400;letter-spacing:0.4px;">View</div>
<svg class="a" style="left:2286px;top:844px" width="32" height="32" viewBox="0 0 32 32"><rect x="0" y="0" width="32" height="32" rx="6" fill="#6b6e86"/><path d="M8.5,16.5 L13.5,21.5 L23,11.8" fill="none" stroke="#fff" stroke-width="4" stroke-linecap="round" stroke-linejoin="round"/></svg>
<div class="t" style="left:2335px;top:846.45px;font-size:29px;line-height:29px;color:#383946;font-weight:400;letter-spacing:0.4px;">Create</div>
<svg class="a" style="left:2617px;top:844px" width="32" height="32" viewBox="0 0 32 32"><rect x="0" y="0" width="32" height="32" rx="6" fill="#6b6e86"/><path d="M8.5,16.5 L13.5,21.5 L23,11.8" fill="none" stroke="#fff" stroke-width="4" stroke-linecap="round" stroke-linejoin="round"/></svg>
<div class="t" style="left:2666px;top:846.45px;font-size:29px;line-height:29px;color:#383946;font-weight:400;letter-spacing:0.4px;">Edit</div>
<svg class="a" style="left:2947px;top:844px" width="32" height="32" viewBox="0 0 32 32"><rect x="0" y="0" width="32" height="32" rx="6" fill="#6b6e86"/><path d="M8.5,16.5 L13.5,21.5 L23,11.8" fill="none" stroke="#fff" stroke-width="4" stroke-linecap="round" stroke-linejoin="round"/></svg>
<div class="t" style="left:2996px;top:846.45px;font-size:29px;line-height:29px;color:#383946;font-weight:400;letter-spacing:0.4px;">Delete</div>
<div class="a" style="left:1258px;top:924px;width:2004px;height:2px;background:#dcdde8"></div>
<div class="t" style="left:1299px;top:976.45px;font-size:29px;line-height:29px;color:#0b0b0d;font-weight:400;letter-spacing:0.4px;">Advanced Configuration</div>
<svg class="a" style="left:1955px;top:974px" width="32" height="32" viewBox="0 0 32 32"><rect x="0" y="0" width="32" height="32" rx="6" fill="#6b6e86"/><path d="M8.5,16.5 L13.5,21.5 L23,11.8" fill="none" stroke="#fff" stroke-width="4" stroke-linecap="round" stroke-linejoin="round"/></svg>
<div class="t" style="left:2004px;top:976.45px;font-size:29px;line-height:29px;color:#383946;font-weight:400;letter-spacing:0.4px;">View</div>
<svg class="a" style="left:2286px;top:974px" width="32" height="32" viewBox="0 0 32 32"><rect x="0" y="0" width="32" height="32" rx="6" fill="#6b6e86"/><path d="M8.5,16.5 L13.5,21.5 L23,11.8" fill="none" stroke="#fff" stroke-width="4" stroke-linecap="round" stroke-linejoin="round"/></svg>
<div class="t" style="left:2335px;top:976.45px;font-size:29px;line-height:29px;color:#383946;font-weight:400;letter-spacing:0.4px;">Create / Edit</div>
<svg class="a" style="left:2617px;top:974px" width="32" height="32" viewBox="0 0 32 32"><rect x="0" y="0" width="32" height="32" rx="6" fill="#6b6e86"/><path d="M8.5,16.5 L13.5,21.5 L23,11.8" fill="none" stroke="#fff" stroke-width="4" stroke-linecap="round" stroke-linejoin="round"/></svg>
<div class="t" style="left:2666px;top:976.45px;font-size:29px;line-height:29px;color:#383946;font-weight:400;letter-spacing:0.4px;">Delete</div>
<div class="a" style="left:1258px;top:1054px;width:2004px;height:2px;background:#dcdde8"></div>
<div class="t" style="left:1299px;top:1106.45px;font-size:29px;line-height:29px;color:#0b0b0d;font-weight:400;letter-spacing:0.4px;">Layouts</div>
<svg class="a" style="left:1955px;top:1104px" width="32" height="32" viewBox="0 0 32 32"><rect x="0" y="0" width="32" height="32" rx="6" fill="#6b6e86"/><path d="M8.5,16.5 L13.5,21.5 L23,11.8" fill="none" stroke="#fff" stroke-width="4" stroke-linecap="round" stroke-linejoin="round"/></svg>
<div class="t" style="left:2004px;top:1106.45px;font-size:29px;line-height:29px;color:#383946;font-weight:400;letter-spacing:0.4px;">View</div>
<svg class="a" style="left:2286px;top:1104px" width="32" height="32" viewBox="0 0 32 32"><rect x="0" y="0" width="32" height="32" rx="6" fill="#6b6e86"/><path d="M8.5,16.5 L13.5,21.5 L23,11.8" fill="none" stroke="#fff" stroke-width="4" stroke-linecap="round" stroke-linejoin="round"/></svg>
<div class="t" style="left:2335px;top:1106.45px;font-size:29px;line-height:29px;color:#383946;font-weight:400;letter-spacing:0.4px;">Create / Edit</div>
<div class="a" style="left:1258px;top:1184px;width:2004px;height:2px;background:#dcdde8"></div>
<div class="t" style="left:1299px;top:1236.45px;font-size:29px;line-height:29px;color:#0b0b0d;font-weight:400;letter-spacing:0.4px;">Plugins</div>
<svg class="a" style="left:1955px;top:1234px" width="32" height="32" viewBox="0 0 32 32"><rect x="0" y="0" width="32" height="32" rx="6" fill="#6b6e86"/><path d="M8.5,16.5 L13.5,21.5 L23,11.8" fill="none" stroke="#fff" stroke-width="4" stroke-linecap="round" stroke-linejoin="round"/></svg>
<div class="t" style="left:2004px;top:1236.45px;font-size:29px;line-height:29px;color:#383946;font-weight:400;letter-spacing:0.4px;">View</div>
<svg class="a" style="left:2286px;top:1234px" width="32" height="32" viewBox="0 0 32 32"><rect x="0" y="0" width="32" height="32" rx="6" fill="#6b6e86"/><path d="M8.5,16.5 L13.5,21.5 L23,11.8" fill="none" stroke="#fff" stroke-width="4" stroke-linecap="round" stroke-linejoin="round"/></svg>
<div class="t" style="left:2335px;top:1236.45px;font-size:29px;line-height:29px;color:#383946;font-weight:400;letter-spacing:0.4px;">Create / Edit</div>
<svg class="a" style="left:2617px;top:1234px" width="32" height="32" viewBox="0 0 32 32"><rect x="0" y="0" width="32" height="32" rx="6" fill="#6b6e86"/><path d="M8.5,16.5 L13.5,21.5 L23,11.8" fill="none" stroke="#fff" stroke-width="4" stroke-linecap="round" stroke-linejoin="round"/></svg>
<div class="t" style="left:2666px;top:1236.45px;font-size:29px;line-height:29px;color:#383946;font-weight:400;letter-spacing:0.4px;">Toggle</div>
<svg class="a" style="left:2947px;top:1234px" width="32" height="32" viewBox="0 0 32 32"><rect x="0" y="0" width="32" height="32" rx="6" fill="#6b6e86"/><path d="M8.5,16.5 L13.5,21.5 L23,11.8" fill="none" stroke="#fff" stroke-width="4" stroke-linecap="round" stroke-linejoin="round"/></svg>
<div class="t" style="left:2996px;top:1236.45px;font-size:29px;line-height:29px;color:#383946;font-weight:400;letter-spacing:0.4px;">Delete</div>
<div class="a" style="left:1258px;top:1314px;width:2004px;height:2px;background:#dcdde8"></div>
<div class="t" style="left:1299px;top:1366.45px;font-size:29px;line-height:29px;color:#0b0b0d;font-weight:400;letter-spacing:0.4px;">Catalog Access Policies</div>
<svg class="a" style="left:1955px;top:1364px" width="32" height="32" viewBox="0 0 32 32"><rect x="0" y="0" width="32" height="32" rx="6" fill="#6b6e86"/><path d="M8.5,16.5 L13.5,21.5 L23,11.8" fill="none" stroke="#fff" stroke-width="4" stroke-linecap="round" stroke-linejoin="round"/></svg>
<div class="t" style="left:2004px;top:1366.45px;font-size:29px;line-height:29px;color:#383946;font-weight:400;letter-spacing:0.4px;">View</div>
<svg class="a" style="left:2286px;top:1364px" width="32" height="32" viewBox="0 0 32 32"><rect x="0" y="0" width="32" height="32" rx="6" fill="#6b6e86"/><path d="M8.5,16.5 L13.5,21.5 L23,11.8" fill="none" stroke="#fff" stroke-width="4" stroke-linecap="round" stroke-linejoin="round"/></svg>
<div class="t" style="left:2335px;top:1366.45px;font-size:29px;line-height:29px;color:#383946;font-weight:400;letter-spacing:0.4px;">Create</div>
<svg class="a" style="left:2617px;top:1364px" width="32" height="32" viewBox="0 0 32 32"><rect x="0" y="0" width="32" height="32" rx="6" fill="#6b6e86"/><path d="M8.5,16.5 L13.5,21.5 L23,11.8" fill="none" stroke="#fff" stroke-width="4" stroke-linecap="round" stroke-linejoin="round"/></svg>
<div class="t" style="left:2666px;top:1366.45px;font-size:29px;line-height:29px;color:#383946;font-weight:400;letter-spacing:0.4px;">Edit</div>
<svg class="a" style="left:2947px;top:1364px" width="32" height="32" viewBox="0 0 32 32"><rect x="0" y="0" width="32" height="32" rx="6" fill="#6b6e86"/><path d="M8.5,16.5 L13.5,21.5 L23,11.8" fill="none" stroke="#fff" stroke-width="4" stroke-linecap="round" stroke-linejoin="round"/></svg>
<div class="t" style="left:2996px;top:1366.45px;font-size:29px;line-height:29px;color:#383946;font-weight:400;letter-spacing:0.4px;">Delete</div>
<div class="a" style="left:1200px;top:1533px;width:2120px;height:500px;background:#fff;border-radius:8px;box-shadow:0 0 1px rgba(40,41,61,.08),0 2px 6px rgba(96,97,112,.12)"></div>
<svg class="a" style="left:1258px;top:1592px" width="60" height="60" viewBox="0 0 60 60"><g transform="scale(1.5)"><defs><linearGradient id="gsrm12581592" x1="0.2" y1="0" x2="0.8" y2="1"><stop offset="0" stop-color="#b394f6"/><stop offset="1" stop-color="#7836f0"/></linearGradient></defs><circle cx="19.8" cy="19.6" r="16.3" fill="url(#gsrm12581592)"/><circle cx="19.8" cy="19.6" r="7.6" fill="#fff"/><g stroke="#fff" stroke-width="2.4" fill="none"><path d="M19.8,2 V12 M3.5,29.5 L13.2,23.4 M36.1,29.5 L26.4,23.4"/></g><path d="M16,20 L18.8,22.6 L23.6,17.6" fill="none" stroke="#a27af5" stroke-width="2.2" stroke-linecap="round"/></g></svg>
<div class="t" style="left:1350px;top:1608.45px;font-size:29px;line-height:29px;color:#0b0b0d;font-weight:400;letter-spacing:0.4px;-webkit-text-stroke:0.8px #0b0b0d;">Service Reliability</div>
<div class="t" style="left:1299px;top:1742.45px;font-size:29px;line-height:29px;color:#0b0b0d;font-weight:400;letter-spacing:0.4px;">SLO</div>
<svg class="a" style="left:1955px;top:1740px" width="32" height="32" viewBox="0 0 32 32"><rect x="1" y="1" width="30" height="30" rx="5.5" fill="#f3f3f9" stroke="#d9dae6" stroke-width="2"/></svg>
<div class="t" style="left:2004px;top:1742.45px;font-size:29px;line-height:29px;color:#383946;font-weight:400;letter-spacing:0.4px;">View</div>
<svg class="a" style="left:2286px;top:1740px" width="32" height="32" viewBox="0 0 32 32"><rect x="1" y="1" width="30" height="30" rx="5.5" fill="#f3f3f9" stroke="#d9dae6" stroke-width="2"/></svg>
<div class="t" style="left:2335px;top:1742.45px;font-size:29px;line-height:29px;color:#383946;font-weight:400;letter-spacing:0.4px;">Create / Edit</div>
<svg class="a" style="left:2617px;top:1740px" width="32" height="32" viewBox="0 0 32 32"><rect x="1" y="1" width="30" height="30" rx="5.5" fill="#f3f3f9" stroke="#d9dae6" stroke-width="2"/></svg>
<div class="t" style="left:2666px;top:1742.45px;font-size:29px;line-height:29px;color:#383946;font-weight:400;letter-spacing:0.4px;">Delete</div>
<div class="a" style="left:1258px;top:1820px;width:2004px;height:2px;background:#dcdde8"></div>
<div class="t" style="left:1299px;top:1871.45px;font-size:29px;line-height:29px;color:#0b0b0d;font-weight:400;letter-spacing:0.4px;">Monitored Services</div>
<svg class="a" style="left:1955px;top:1869px" width="32" height="32" viewBox="0 0 32 32"><rect x="1" y="1" width="30" height="30" rx="5.5" fill="#f3f3f9" stroke="#d9dae6" stroke-width="2"/></svg>
<div class="t" style="left:2004px;top:1871.45px;font-size:29px;line-height:29px;color:#383946;font-weight:400;letter-spacing:0.4px;">View</div>
<svg class="a" style="left:2286px;top:1869px" width="32" height="32" viewBox="0 0 32 32"><rect x="1" y="1" width="30" height="30" rx="5.5" fill="#f3f3f9" stroke="#d9dae6" stroke-width="2"/></svg>
<div class="t" style="left:2335px;top:1871.45px;font-size:29px;line-height:29px;color:#383946;font-weight:400;letter-spacing:0.4px;">Create / Edit</div>
<svg class="a" style="left:2617px;top:1869px" width="32" height="32" viewBox="0 0 32 32"><rect x="1" y="1" width="30" height="30" rx="5.5" fill="#f3f3f9" stroke="#d9dae6" stroke-width="2"/></svg>
<div class="t" style="left:2666px;top:1871.45px;font-size:29px;line-height:29px;color:#383946;font-weight:400;letter-spacing:0.4px;">Delete</div>
<svg class="a" style="left:2947px;top:1869px" width="32" height="32" viewBox="0 0 32 32"><rect x="1" y="1" width="30" height="30" rx="5.5" fill="#f3f3f9" stroke="#d9dae6" stroke-width="2"/></svg>
<div class="t" style="left:2996px;top:1871.45px;font-size:29px;line-height:29px;color:#383946;font-weight:400;letter-spacing:0.4px;">Toggle</div>
<div class="a" style="left:544px;top:0px;width:48px;height:1918px;background:linear-gradient(90deg,rgba(30,30,50,.12),rgba(30,30,50,.05) 40%,rgba(30,30,50,0))"></div>
</div></body></html>
